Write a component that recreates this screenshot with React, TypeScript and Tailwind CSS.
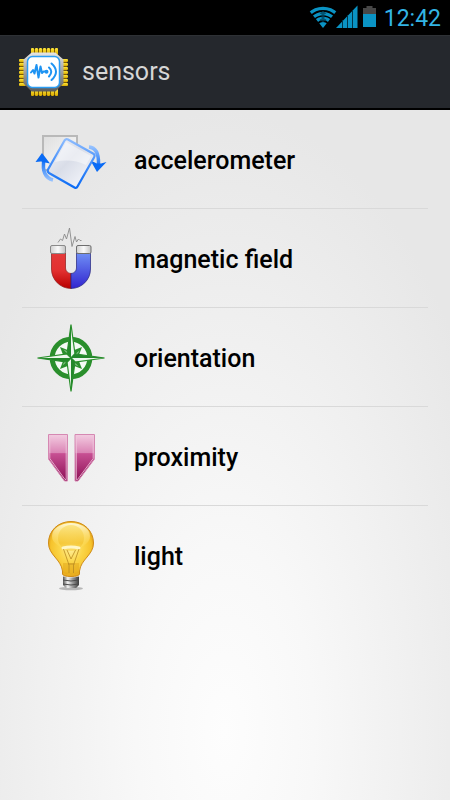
import type { ReactNode } from 'react'

type Sensor = {
  name: string
  icon: ReactNode
}

const sensors: Sensor[] = [
  { name: 'accelerometer', icon: <AccelerometerIcon /> },
  { name: 'magnetic field', icon: <MagnetIcon /> },
  { name: 'orientation', icon: <CompassIcon /> },
  { name: 'proximity', icon: <ProximityIcon /> },
  { name: 'light', icon: <BulbIcon /> },
]

export default function App() {
  return (
    <div className="min-h-screen flex flex-col font-[Roboto,sans-serif] bg-black">
      <StatusBar />

      <header className="h-[75px] shrink-0 flex items-center gap-[13px] pl-[19px] bg-[#25282d] border-t border-t-[#2e3135] border-b-2 border-b-black">
        <ChipIcon />
        <h1 className="text-[25px] leading-8 text-[#d6d6d6]">sensors</h1>
      </header>

      <main className="flex-1 bg-[radial-gradient(ellipse_66%_90%_at_50%_90%,#fdfdfd_0%,#f8f8f8_30%,#e7e7e7_100%)]">
        <ul className="mx-[22px]">
          {sensors.map((sensor) => (
            <li key={sensor.name} className="border-b border-[#d9d9d9] last:border-transparent">
              <button className="w-full h-[98px] pl-[13px] flex items-center gap-[27px] text-left">
                {sensor.icon}
                <span className="pt-1 text-[25px] leading-8 font-medium text-black">{sensor.name}</span>
              </button>
            </li>
          ))}
        </ul>
      </main>
    </div>
  )
}

function StatusBar() {
  return (
    <div className="h-[35px] shrink-0 flex items-center justify-end gap-[7px] pr-[9px] bg-black">
      <svg width="69" height="35" viewBox="0 0 69 35" role="img" aria-label="Wi-Fi, signal and battery">
        <defs>
          <clipPath id="fan">
            <path d="M15 28L-1 8V0H31V8Z" />
          </clipPath>
        </defs>
        {/* wifi */}
        <g clipPath="url(#fan)" fill="none" stroke="#0a93c4" strokeWidth="3.4">
          <circle cx="15" cy="28" r="19.6" />
          <circle cx="15" cy="28" r="14.400" />
          <circle cx="15" cy="28" r="9.600" />
          <circle cx="15" cy="28" r="3" strokeWidth="6" />
        </g>
        <path d="M15 10.500L18.500 14H16.500V19H18.500L15 22.500L11.500 19H13.500V14H11.500Z" fill="#00405a" opacity="0.750" />
        {/* signal */}
        <path d="M28 28L49.500 5.500V28Z" fill="#0a93c4" />
        <path d="M34.500 20V28M39.500 15V28M44.500 10V28" stroke="#003548" strokeWidth="1" />
        {/* battery */}
        <path d="M55 8H58.500V6H64.500V8H68V14H55Z" fill="#474747" />
        <path d="M55 14H68V27H55Z" fill="#0a93c4" />
      </svg>
      <time className="pt-0.5 text-[23px] leading-8 text-[#33b5e5]">12:42</time>
    </div>
  )
}

function ChipIcon() {
  const pins = [12, 16, 20, 24, 28, 32, 36]
  return (
    <svg width="50" height="50" viewBox="0 0 50 50" className="shrink-0" aria-hidden="true">
      <defs>
        <linearGradient id="pinV" x1="0" y1="0" x2="0" y2="1">
          <stop offset="0" stopColor="#ffe83c" />
          <stop offset="1" stopColor="#d9a900" />
        </linearGradient>
        <linearGradient id="chip" x1="0" y1="0" x2="0" y2="1">
          <stop offset="0" stopColor="#e2e2e2" />
          <stop offset="1" stopColor="#5e5e5e" />
        </linearGradient>
      </defs>
      <path d="M12 4H39M12 46H39M3 12V39M46 12V39" stroke="#7d5c00" strokeWidth="4" />
      {pins.map((p) => (
        <g key={p} fill="url(#pinV)">
          <rect x={p} y="1" width="3" height="7" rx="1" />
          <rect x={p} y="42" width="3" height="7" rx="1" />
          <rect x="0" y={p} width="7" height="3" rx="1" />
          <rect x="42" y={p} width="7" height="3" rx="1" />
        </g>
      ))}
      <path d="M13 6.500H36L43.500 13V36L36 43.500H13L5.500 36V13Z" fill="url(#chip)" stroke="url(#chip)" strokeWidth="2" strokeLinejoin="round" />
      <rect x="8.500" y="9.500" width="32" height="31" rx="5" fill="#fff" stroke="#2a9df4" strokeWidth="1.500" />
      <g fill="none" stroke="#1e93f2" strokeWidth="2" strokeLinecap="round" strokeLinejoin="round">
        <path d="M12 25.500L14 23L15.500 26.500L17.500 18L19.500 30.500L21.500 19.500L23 26L24.500 24.500H28" />
        <path d="M30 20.500Q34.500 24.500 30 29.500" />
        <path d="M32.500 16.500Q41.500 24.500 32.500 33" />
      </g>
      <circle cx="27.500" cy="24.800" r="2" fill="#1e93f2" />
    </svg>
  )
}

function AccelerometerIcon() {
  return (
    <svg width="72" height="72" viewBox="0 0 72 72" className="shrink-0" aria-hidden="true">
      <defs>
        <linearGradient id="cardEdge" x1="0" y1="0" x2="0" y2="1">
          <stop offset="0" stopColor="#8dbcff" />
          <stop offset="0.450" stopColor="#4a92fa" />
          <stop offset="1" stopColor="#0a6bf5" />
        </linearGradient>
        <linearGradient id="cardFace" x1="0" y1="0" x2="1" y2="1">
          <stop offset="0" stopColor="#f4f6fb" />
          <stop offset="0.450" stopColor="#d9dde8" />
          <stop offset="1" stopColor="#fbfcff" />
        </linearGradient>
        <linearGradient id="backFace" x1="0" y1="0" x2="1" y2="1">
          <stop offset="0" stopColor="#dedede" />
          <stop offset="1" stopColor="#fff" />
        </linearGradient>
        <linearGradient id="arrowUp" x1="0" y1="0" x2="0" y2="1">
          <stop offset="0" stopColor="#0a6bf5" />
          <stop offset="1" stopColor="#93c0ff" />
        </linearGradient>
        <linearGradient id="arrowDown" x1="0" y1="0" x2="0" y2="1">
          <stop offset="0" stopColor="#93c0ff" />
          <stop offset="1" stopColor="#2b7df5" />
        </linearGradient>
      </defs>
      <rect x="8" y="13" width="34" height="34" fill="url(#backFace)" stroke="#b9b9b9" strokeWidth="2" />
      <path d="M9 36Q6 54 18 57" fill="none" stroke="url(#arrowUp)" strokeWidth="3.500" />
      <path d="M7 30L0.500 39L6 38.500L10 39.500L15 40.500Z" fill="#0a6bf5" />
      <path d="M54 24Q64 25 63.500 41" fill="none" stroke="url(#arrowDown)" strokeWidth="3.500" />
      <path d="M62 49L55.500 37.500L62 40.500L66 40.500L71.500 39Z" fill="#0a6bf5" />
      <path d="M33 16.500L58 30.500Q60.500 32 59 34.500L42.500 63.500Q41.500 65.500 39.500 64.500L14 50Q12 48.500 13 46.500L29.500 17.500Q31 15.500 33 16.500Z" fill="url(#cardFace)" stroke="url(#cardEdge)" strokeWidth="2.200" />
      <path d="M20 39L31 19L56 33L51 42Q36 35 20 39Z" fill="#fff" opacity="0.450" />
    </svg>
  )
}

function MagnetIcon() {
  return (
    <svg width="72" height="72" viewBox="0 0 72 72" className="shrink-0" aria-hidden="true">
      <defs>
        <linearGradient id="red" x1="0" y1="0" x2="0" y2="1">
          <stop offset="0" stopColor="#e43a3a" />
          <stop offset="0.500" stopColor="#e23030" />
          <stop offset="1" stopColor="#b80000" />
        </linearGradient>
        <linearGradient id="blue" x1="0" y1="0" x2="0" y2="1">
          <stop offset="0" stopColor="#6f8ff5" />
          <stop offset="1" stopColor="#3124cf" />
        </linearGradient>
        <linearGradient id="cap" x1="0" y1="0" x2="1" y2="0">
          <stop offset="0" stopColor="#d0d0d0" />
          <stop offset="0.500" stopColor="#fafafa" />
          <stop offset="1" stopColor="#c2c2c2" />
        </linearGradient>
      </defs>
      <path d="M16.500 31V47A19.500 19.500 0 0 0 36 66.500V51.500A5.500 5.500 0 0 1 30.500 46V31Z" fill="url(#red)" stroke="#8c1a1a" strokeWidth="0.700" />
      <path d="M55.500 31V47A19.500 19.500 0 0 1 36 66.500V51.500A5.500 5.500 0 0 0 41.500 46V31Z" fill="url(#blue)" stroke="#23237a" strokeWidth="0.700" />
      <rect x="15.500" y="23.500" width="15" height="8" rx="1.500" fill="url(#cap)" stroke="#8a8a8a" strokeWidth="1" />
      <rect x="41.500" y="23.500" width="14.500" height="8" rx="1.500" fill="url(#cap)" stroke="#6e6e6e" strokeWidth="1" />
      <path d="M23 20.500L25.500 17L27.500 18.500L29.500 12L31.500 17L34.500 6L37 24.500L40 14.500L41.500 20L43.500 17L45 18.500L46.500 18.500" fill="none" stroke="#8a8a8a" strokeWidth="0.900" />
    </svg>
  )
}

function CompassIcon() {
  const quarters = [0, 90, 180, 270]
  return (
    <svg width="72" height="72" viewBox="0 0 72 72" className="shrink-0" aria-hidden="true">
      <circle cx="36" cy="37" r="18.800" fill="#f4faf4" stroke="#2a8f2c" strokeWidth="5" />
      {quarters.map((angle) => (
        <g key={angle} transform={`rotate(${angle} 36 37)`}>
          <path d="M47 26L43.500 35L36 37L38 29.500Z" fill="#2a8f2c" />
          <path d="M44.500 29.500L42 34.500L37 36Z" fill="#8cc58d" />
        </g>
      ))}
      {quarters.map((angle) => (
        <g key={angle} transform={`rotate(${angle} 36 37)`}>
          <path d="M36 3.500L40 33L36 37L32 33Z" fill="#edf7ed" stroke="#2a8f2c" strokeWidth="1.200" />
          <path d="M36 3.500L32 33L36 37Z" fill="#23882a" />
        </g>
      ))}
    </svg>
  )
}

function ProximityIcon() {
  return (
    <svg width="72" height="72" viewBox="0 0 72 72" className="shrink-0" aria-hidden="true">
      <defs>
        <linearGradient id="pink" x1="0" y1="0" x2="0" y2="1">
          <stop offset="0" stopColor="#f3cce1" />
          <stop offset="0.400" stopColor="#da83b4" />
          <stop offset="0.410" stopColor="#c75093" />
          <stop offset="1" stopColor="#8d0f55" />
        </linearGradient>
      </defs>
      <g fill="url(#pink)" stroke="#d588b2" strokeWidth="1" strokeLinejoin="round">
        <path d="M13.500 14.500H32.500V61H29.500L13.500 39Z" />
        <path d="M40 14.500H59.500V39L43 61H40Z" />
      </g>
      <g fill="none" stroke="#efc8dd" strokeWidth="0.800">
        <path d="M14.800 15.800H31.200V59.500H30L14.800 38.500Z" />
        <path d="M41.300 15.800H58.200V38.500L42.500 59.500H41.300Z" />
      </g>
    </svg>
  )
}

function BulbIcon() {
  return (
    <svg width="72" height="72" viewBox="0 0 72 72" className="shrink-0" aria-hidden="true">
      <defs>
        <radialGradient id="glass" cx="0.500" cy="0.480" r="0.560">
          <stop offset="0" stopColor="#fff0a0" />
          <stop offset="0.450" stopColor="#fbd64a" />
          <stop offset="0.800" stopColor="#f6c32c" />
          <stop offset="1" stopColor="#dd9612" />
        </radialGradient>
        <linearGradient id="shine" x1="0" y1="0" x2="0" y2="1">
          <stop offset="0" stopColor="#fffbe0" stopOpacity="0.950" />
          <stop offset="1" stopColor="#ffe05a" stopOpacity="0.100" />
        </linearGradient>
        <linearGradient id="core" x1="0" y1="0" x2="0" y2="1">
          <stop offset="0" stopColor="#fbe277" />
          <stop offset="0.700" stopColor="#f4c432" />
          <stop offset="1" stopColor="#f9d95c" />
        </linearGradient>
        <linearGradient id="metal" x1="0" y1="0" x2="1" y2="0">
          <stop offset="0" stopColor="#555" />
          <stop offset="0.300" stopColor="#f2f2f2" />
          <stop offset="0.600" stopColor="#999" />
          <stop offset="1" stopColor="#3c3c3c" />
        </linearGradient>
      </defs>
      <ellipse cx="36" cy="69.500" rx="12" ry="1.800" fill="#8f8f8f" opacity="0.600" />
      <path d="M36 2.500C49 2.500 58.500 12 58.500 24C58.500 36 46 40 44.500 52V55Q44 57.500 36 57.500T27.500 55V52C26 40 13.500 36 13.500 24C13.500 12 23 2.500 36 2.500Z" fill="url(#glass)" stroke="#cf8b17" strokeWidth="1" />
      <ellipse cx="36" cy="17" rx="19" ry="13" fill="url(#shine)" />
      <ellipse cx="36" cy="19" rx="13" ry="13" fill="url(#core)" opacity="0.800" />
      <path d="M28 44H44V54Q36 57 28 54Z" fill="#d8960f" opacity="0.350" />
      <path d="M28 29Q36 27 44 29" fill="none" stroke="#fff6c4" strokeWidth="3" strokeLinecap="round" />
      <path d="M28.500 30L34 46V54M44 30L38.500 46V54M32 31L36 40L40.500 31M33 45H39.500" fill="none" stroke="#b98a22" strokeWidth="0.800" />
      <path d="M28 57.500Q36 59.500 44 57.500V66L41 69H31L28 66Z" fill="url(#metal)" />
      <path d="M28 61Q36 63 44 61M28 65Q36 67 44 65" fill="none" stroke="#4a4a4a" strokeWidth="1" />
    </svg>
  )
}
